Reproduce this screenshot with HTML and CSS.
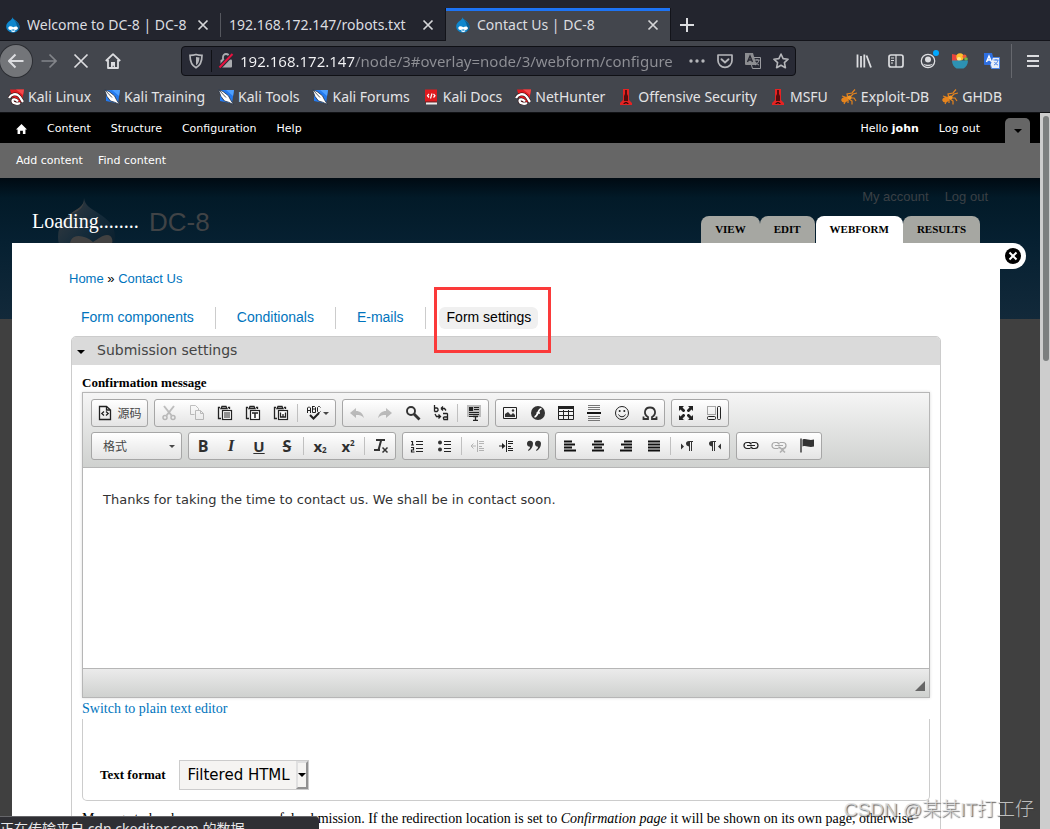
FILE: index.html
```html
<!DOCTYPE html>
<html lang="en">
<head>
<meta charset="utf-8">
<title>Contact Us | DC-8</title>
<link rel="stylesheet" href="styles.css">
</head>
<body>
<svg class="sprite" aria-hidden="true">
  <symbol id="drop" viewBox="1 0 14 16"><path fill="#0f86cc" d="M7.500 0.300C8 3 14.500 4.500 14.500 9.800C14.500 13.500 11 15.700 8 15.700S1.200 13.500 1.200 9.500C1.200 4.500 7 4 7.500.3Z"/><path fill="#0b5e94" d="M9 3c2 1.500 5.500 3 5.500 6.800 0 2-.8 3.500-2.500 4.400C12.500 10 12 6 9 3Z"/><path fill="#fff" d="M8.200 10.300C6.500 8.800 3.500 8.800 3.300 11c0 2.200 2.600 2.500 4.900 1.200 1.500 1.200 4.700.8 4.700-1 0-2.200-2.900-2-4.700-.9ZM6 14c1.300 1.200 3.300 1.200 4.500 0l-.6-.7c-1 .6-2.200.6-3.400 0Z"/></symbol>
  <symbol id="x" viewBox="0 0 16 16"><path d="M3.500 3.500l9 9M12.500 3.500l-9 9" stroke="currentColor" stroke-width="1.700" fill="none"/></symbol>
  <symbol id="stop" viewBox="0 0 16 16"><path d="M1.500 1.500l13 13M14.500 1.500l-13 13" stroke="currentColor" stroke-width="1.700" fill="none"/></symbol>
  <symbol id="plus" viewBox="0 0 16 16"><path d="M8 1v14M1 8h14" stroke="currentColor" stroke-width="2" fill="none"/></symbol>
  <symbol id="back" viewBox="0 0 16 16"><path d="M15.500 8H1M7.500 1.500L1 8l6.500 6.500" stroke="currentColor" stroke-width="2" fill="none"/></symbol>
  <symbol id="forward" viewBox="0 0 16 16"><path d="M.5 8H15M8.500 1.500L15 8l-6.500 6.500" stroke="currentColor" stroke-width="1.700" fill="none"/></symbol>
  <symbol id="home" viewBox="0 0 16 16"><path d="M.8 8L8 1.200 15.200 8M3 7v8h10V7" stroke="currentColor" stroke-width="1.800" stroke-linejoin="round" fill="none"/><path fill="currentColor" d="M6 9h4v6H8.700v-2.200h-1V15H6z"/></symbol>
  <symbol id="shield" viewBox="0 0 16 16"><path d="M8 1.500c2 .6 4 .8 6 .8C14 8 12.500 12.500 8 14.800 3.500 12.500 2 8 2 2.300c2 0 4-.2 6-.8Z" stroke="currentColor" stroke-width="1.700" fill="none"/><path fill="currentColor" d="M8 4v8.300C10.300 10.800 11.300 8 11.500 4.500 10 4.400 9 4.200 8 4Z"/></symbol>
  <symbol id="lock" viewBox="0 0 16 16"><path d="M5 7V4a3 3 0 016 0v3" stroke="#aaabaf" stroke-width="1.800" fill="none"/><rect x="2.500" y="6.500" width="11.500" height="8" rx="1" fill="#aaabaf"/><path d="M1.500 14.500L14.500 1" stroke="#292a34" stroke-width="4"/><path d="M1.500 14.500L14.500 1" stroke="#e7123f" stroke-width="2"/></symbol>
  <symbol id="dots" viewBox="0 0 16 16"><g fill="currentColor"><circle cx="2" cy="8" r="1.700"/><circle cx="8" cy="8" r="1.700"/><circle cx="14" cy="8" r="1.700"/></g></symbol>
  <symbol id="pocket" viewBox="0 0 16 16"><path d="M1 2h14v5.500a7 6.800 0 01-14 0Z" stroke="currentColor" stroke-width="1.700" stroke-linejoin="round" fill="none"/><path d="M4.500 6.200L8 9.500l3.500-3.300" stroke="currentColor" stroke-width="1.900" stroke-linecap="round" fill="none"/></symbol>
  <symbol id="translate" viewBox="0 0 16 16"><path fill="var(--a,#8c8d91)" d="M0 0h8l3.500 12H1a1 1 0 01-1-1Z"/><path d="M2.500 9L5 3l2.500 6M3.500 7h3" stroke="var(--b,#292a34)" stroke-width="1.400" fill="none"/><path fill="var(--d,none)" stroke="var(--c,#9b9ca1)" d="M9 4.500h6.500v11h-8L6.500 12"/><path d="M9.500 7h5M12 6v1.500M14 7c-.5 2.500-2 4-4 5M10.500 9c1 1.500 2 2.500 3.500 3" stroke="var(--c,#9b9ca1)" fill="none"/></symbol>
  <symbol id="star" viewBox="0 0 16 16"><path d="M8 1l2.100 4.600 5 .6-3.700 3.500 1 5L8 12.200l-4.400 2.500 1-5L.9 6.200l5-.6Z" stroke="currentColor" stroke-width="1.600" stroke-linejoin="round" fill="none"/></symbol>
  <symbol id="library" viewBox="0 0 16 16"><path d="M1.500 1.500v13M5 3v11.500M8.300 1.500v13M10.500 2.500l4.500 12" stroke="currentColor" stroke-width="1.800" fill="none"/></symbol>
  <symbol id="sidebar" viewBox="0 0 16 16"><rect x="1" y="2" width="14" height="12" rx="2" stroke="currentColor" stroke-width="1.700" fill="none"/><path d="M8 2v12M3 5h3M3 7.500h3M3 10h2" stroke="currentColor" stroke-width="1.200"/></symbol>
  <symbol id="account" viewBox="0 0 16 16"><circle cx="8" cy="8" r="6.700" stroke="currentColor" stroke-width="1.300" fill="none"/><circle cx="8" cy="6.500" r="3" fill="currentColor"/><path fill="currentColor" d="M3.200 10.800c3 1.400 6.500 1.400 9.600 0C11 14 5 14 3.200 10.800Z"/></symbol>
  <symbol id="bowl" viewBox="0 0 16 16"><path fill="#e8443c" d="M0 1l5 1 1 6H0Z"/><circle cx="8" cy="4" r="3.700" fill="#fdbf2d"/><circle cx="12.500" cy="3.500" r="2" fill="#ed5a3a"/><circle cx="14" cy="6" r="1.800" fill="#74b943"/><circle cx="7" cy="6" r="2" fill="#ffe58a"/><path fill="#2d91b2" d="M0 7.500h16c0 4-2 6.500-4.500 8h-7C2 14 0 11.500 0 7.500Z"/></symbol>
  <symbol id="menu" viewBox="0 0 16 16"><path d="M2 3h12M2 8h12M2 13h12" stroke="currentColor" stroke-width="2"/></symbol>
  <symbol id="kali" viewBox="0 0 16 16"><path fill="#e11d22" d="M2 0.500h14L14 13 6 14.500Z"/><path fill="#f4484b" d="M8 0.500h8L15 6Z"/><path d="M1 9C3 5 8 4 11 7c2 2 2.500 4 4 6M12 14C9 15.500 4.500 14.500 4.500 11.700c0-2.200 3.500-1.700 5.500.8" stroke="#2a0b0d" stroke-width="3.400" fill="none"/><path d="M1 9C3 5 8 4 11 7c2 2 2.500 4 4 6M12 14C9 15.500 4.500 14.500 4.500 11.700c0-2.200 3.500-1.700 5.500.8" stroke="#fff" stroke-width="2.300" fill="none"/></symbol>
  <symbol id="blade" viewBox="0 0 16 16"><path fill="#237af0" d="M2 1h14l-2 13.500L2 12Z"/><path fill="#4ea0ff" d="M8 1h8l-1 6Z"/><path fill="#fff" stroke="#26303f" stroke-width=".8" d="M.3.500L5 2.500l5.500 4.300 2 4 3 4.700-5-2.300-4-1.200L3 7.500Z"/><path stroke="#26303f" stroke-width=".8" fill="none" d="M1 1l7 7.500"/></symbol>
  <symbol id="docs" viewBox="0 0 16 16"><path fill="#e01a1f" d="M2 0.500h12v12H2Z"/><path fill="#9c1013" d="M2 12.500h12v1H2Z"/><path fill="#eee" d="M3 13.500h11v2H3Z"/><path d="M6 5L4.500 6.700 6 8.500M10.500 5L12 6.700l-1.500 1.800M9 4.500L7.500 9.500" stroke="#fff" stroke-width="1.200" fill="none"/></symbol>
  <symbol id="tower" viewBox="0 0 16 16"><path fill="#e62222" d="M5 0h6v11l3 3v2H2v-2l3-3Z"/><path fill="#570c0c" d="M7 1h2v4l1 2v5H6V7l1-2Z"/><path fill="#3a0909" d="M5 15l2-2h2l2 2H9l-1-1-1 1Z"/></symbol>
  <symbol id="bug" viewBox="0 0 16 16"><g stroke="#e6841d" stroke-width="1.200" fill="none"><path d="M7 9L6 5l5-1 3-3.500M9 8l3-3 4-1M9 9l4 0 2 3M8 10l3 2 0 3.500M5 11l-2 4M4 8L1 7M7 11l0 3"/></g><ellipse cx="4" cy="10.500" rx="3.800" ry="2.700" fill="#e6841d" transform="rotate(-20 4 10.500)"/><circle cx="8.500" cy="8.500" r="2" fill="#f0982a"/></symbol>
  <symbol id="adminhome" viewBox="0 0 12 12"><path fill="#fff" d="M6 0.500L12 6.500H10.300V11.500H7.500V8H4.500v3.500H1.700v-5H0Z"/></symbol>

  <symbol id="source" viewBox="0 0 16 16"><path d="M2.500 1.500h7L13.500 5v9.500h-11Z" stroke="#222" stroke-width="1.300" fill="none"/><path d="M9.500 1.500V5H13M7 6.500L4.800 8.500 7 10.500M9 6.500l2.200 2L9 10.500" stroke="#222" stroke-width="1.300" fill="none"/></symbol>
  <symbol id="cut" viewBox="0 0 16 16"><g stroke="#555" fill="none"><path stroke-width="2" d="M3 1l7.500 9.500M13 1L5.500 10.500"/><circle cx="4" cy="12.500" r="2" stroke-width="1.500"/><circle cx="12" cy="12.500" r="2" stroke-width="1.500"/></g></symbol>
  <symbol id="copy" viewBox="0 0 16 16"><path d="M5.500 9.500h-4v-9h5l3 3v2M6.500 5.500h5l3 3v6h-8ZM11.500 5.500v3h3" stroke="#555" fill="none"/></symbol>
  <symbol id="clip" viewBox="0 0 16 16"><path d="M3 2.500H1.500v11H4M11 2.500h1.500V4M4 3.500l1-2h4l1 2Z" stroke="#222" stroke-width="1.300" fill="none"/><rect x="5.500" y="5.500" width="9" height="9" stroke="#222" stroke-width="1.200" fill="#fff"/></symbol>
  <symbol id="paste" viewBox="0 0 16 16"><use href="#clip"/><path d="M7 8h6M7 10h6M7 12h6" stroke="#222"/></symbol>
  <symbol id="pastetext" viewBox="0 0 16 16"><use href="#clip"/><path d="M7 8h6M10 8v5" stroke="#222" stroke-width="1.500"/></symbol>
  <symbol id="pasteword" viewBox="0 0 16 16"><use href="#clip"/><path d="M7.500 7.500v4.500h2.500v-3 3h2.500V7.500" stroke="#222" stroke-width="1.300" fill="none"/></symbol>
  <symbol id="spell" viewBox="0 0 16 16"><path d="M1.500 8V3l1-1h1l1 1v5M1.500 5.500h3M6.500 1.500V7.500M6 1.500h2.500l1 1v1.500h-3M9.500 4v3.500H6.500M14.500 2.500l-1-1h-1l-1 1v4l1 1h1l1-1" stroke="#222" fill="none"/><path d="M4 10l3.500 3.500L13 8" stroke="#222" stroke-width="2" fill="none"/></symbol>
  <symbol id="undo" viewBox="0 0 16 16"><path fill="#555" d="M1 8l6-5v3c4 0 7 2.500 8 7-2-2.500-4.500-3-8-3v3Z"/></symbol>
  <symbol id="redo" viewBox="0 0 16 16"><path fill="#555" d="M15 8L9 3v3c-4 0-7 2.500-8 7 2-2.500 4.500-3 8-3v3Z"/></symbol>
  <symbol id="find" viewBox="0 0 16 16"><circle cx="6" cy="6" r="4" stroke="#333" stroke-width="1.900" fill="none"/><path d="M9 9l5.500 5.500" stroke="#333" stroke-width="2.800"/></symbol>
  <symbol id="replace" viewBox="0 0 16 16"><path d="M1.500 0v6.500M1.500 3h2.500l1 1v1.500l-1 1H1.500M10 8.500h4l.5.500v5.500H11l-.5-1v-1l1-.5h3M8 3.500h3.500l1.500 2M8 3.500l2-2M8 3.500l2 2M2 9l1.500 2.500h4M5.500 9.500l2 2-2 2" stroke="#222" stroke-width="1.300" fill="none"/></symbol>
  <symbol id="selectall" viewBox="0 0 16 16"><rect x="1" y="0" width="14" height="12" fill="#bbb"/><path fill="#222" d="M3 2h4v4H3z"/><path d="M8 2.500h5M8 4.500h5M3 7.500h10M3 9.500h10M3 11.500h4" stroke="#222"/><path d="M7 11.500h5M7 15.500h5M9.500 11.500v4" stroke="#222" stroke-width="1.300"/></symbol>
  <symbol id="image" viewBox="0 0 16 16"><path d="M1.500 2.500h13v11h-13Z" stroke="#222" fill="none"/><path fill="#333" d="M3 12V9l3-2 3 3 2-2 2 2v2Z"/><circle cx="11" cy="5.500" r="1.200" fill="#333"/></symbol>
  <symbol id="flash" viewBox="0 0 16 16"><circle cx="8" cy="8" r="7" fill="#333"/><path d="M11.500 3.500C7.500 4 8.500 11 4.500 12M6.500 8H10" stroke="#fff" stroke-width="1.700" fill="none"/></symbol>
  <symbol id="table" viewBox="0 0 16 16"><path d="M.5 2.500h15v12H.5ZM.5 6.500h15M.5 10.500h15M5.500 5v9.500M10.500 5v9.500" stroke="#222" fill="none"/><path fill="#222" d="M0 1h16v3H0z"/></symbol>
  <symbol id="hr" viewBox="0 0 16 16"><path d="M2 .5h12M2 2.500h12M2 4.500h12M2 11.500h12M2 13.500h12M2 15.500h12" stroke="#777"/><path d="M1 8h14" stroke="#111" stroke-width="2"/></symbol>
  <symbol id="smile" viewBox="0 0 16 16"><circle cx="8" cy="8" r="6.500" stroke="#222" fill="none"/><path d="M4.500 9.500c1.500 3 5.500 3 7 0" stroke="#222" fill="none"/><circle cx="5.700" cy="6" r="1" fill="#222"/><circle cx="10.300" cy="6" r="1" fill="#222"/></symbol>
  <symbol id="omega" viewBox="0 0 16 16"><path d="M1.500 11.500v2.500h4.500v-2C1 9 2.500 2.500 8 2.500S15 9 10 12v2h4.500v-2.500" stroke="#333" stroke-width="1.800" fill="none"/></symbol>
  <symbol id="maximize" viewBox="0 0 16 16"><path fill="#222" d="M1 1h5L4.500 2.500l3 3-2 2-3-3L1 6zM15 1v5l-1.500-1.500-3 3-2-2 3-3L10 1zM1 15v-5l1.500 1.500 3-3 2 2-3 3L6 15zM15 15h-5l1.500-1.500-3-3 2-2 3 3L15 10z"/><path d="M8 0v16M0 8h16" stroke="#f7f7f7" stroke-width="2"/></symbol>
  <symbol id="blocks" viewBox="0 0 16 16"><path d="M1.500 1.500h8v8h-8Z" stroke="#555" stroke-dasharray="1 1" fill="none"/><rect x="11.500" y="1.500" width="3" height="13" rx="1" stroke="#222" fill="none"/><rect x="1.500" y="11.500" width="8" height="3" rx="1" stroke="#222" fill="none"/></symbol>
  <symbol id="clear" viewBox="0 0 16 16"><path d="M3 2h9M8.200 2L5.500 12M1 12h6" stroke="#333" stroke-width="2" fill="none"/><path d="M9.500 9.500l5 5M14.500 9.500l-5 5" stroke="#333" stroke-width="1.500"/></symbol>
  <symbol id="ol" viewBox="0 0 16 16"><path d="M2 3.500h1.500V7M2 7h3M2 9.500h2.500V12H2.500v2h3M7 3.500h7M7 6.500h7M7 10.500h7M7 13.500h7" stroke="#222" stroke-width="1.200" fill="none"/></symbol>
  <symbol id="ul" viewBox="0 0 16 16"><circle cx="3" cy="4.500" r="2" fill="#333"/><circle cx="3" cy="11.500" r="2" fill="#333"/><path d="M7 3.500h7M7 6.500h7M7 10.500h7M7 13.500h7" stroke="#222" stroke-width="1.200"/></symbol>
  <symbol id="outdent" viewBox="0 0 16 16"><path d="M7.500 2v12M9 3.500h5M9 5.500h5M9 8.500h3M9 10.500h5M9 12.500h5M1 8h5M3.500 5.500L1 8l2.500 2.500" stroke="#444" fill="none"/></symbol>
  <symbol id="indent" viewBox="0 0 16 16"><path d="M8.500 2v12M10 3.500h5M10 5.500h5M10 8.500h3M10 10.500h5M10 12.500h5M1 8h5" stroke="#222" fill="none"/><path fill="#222" d="M4 5l3.500 3L4 11z"/></symbol>
  <symbol id="quote" viewBox="0 0 16 16"><path fill="#333" d="M1 6a3 3 0 016-.5C7 9 5 11.500 2.500 13L2 12c1.500-1 2-2 2-3.300A3 3 0 011 6ZM9 6a3 3 0 016-.5c0 3.500-2 6-4.500 7.500L10 12c1.500-1 2-2 2-3.300A3 3 0 019 6Z"/></symbol>
  <symbol id="left" viewBox="0 0 16 16"><path d="M2 3.500h8M2 6.500h11M2 9.500h8M2 12.500h12" stroke="#111" stroke-width="2"/></symbol>
  <symbol id="center" viewBox="0 0 16 16"><path d="M4 3.500h8M2 6.500h12M4 9.500h8M2 12.500h12" stroke="#111" stroke-width="2"/></symbol>
  <symbol id="right" viewBox="0 0 16 16"><path d="M6 3.500h8M3 6.500h11M6 9.500h8M2 12.500h12" stroke="#111" stroke-width="2"/></symbol>
  <symbol id="justify" viewBox="0 0 16 16"><path d="M2 3.500h12M2 6.500h12M2 9.500h12M2 12.500h12" stroke="#111" stroke-width="2"/></symbol>
  <symbol id="ltr" viewBox="0 0 16 16"><path fill="#333" d="M2 5.500L5 8.500 2 11.500zM14 3v1h-1v9h-1V4h-1v9h-1V8.500C6 8 6 3 10 3z"/></symbol>
  <symbol id="rtl" viewBox="0 0 16 16"><path fill="#333" d="M14 5.500L11 8.500l3 3zM9 3v1H8v9H7V4H6v9H5V8.500C1 8 1 3 5 3z"/></symbol>
  <symbol id="link" viewBox="0 0 16 16"><path d="M7.500 10.500H4a3 3 0 010-6h3.500M8.500 4.500H12a3 3 0 010 6H8.500M4 7.500h8" stroke="#222" stroke-width="1.200" fill="none"/><path d="M6.500 5.500h1.500v1M9.500 9.500H8v-1" stroke="#222" stroke-width="1.200" fill="none"/></symbol>
  <symbol id="unlink" viewBox="0 0 16 16"><use href="#link"/><path d="M9 9.500l5 5M14 9.500l-5 5" stroke="#444" stroke-width="1.700"/></symbol>
  <symbol id="flag" viewBox="0 0 16 16"><path d="M2 0.500v14" stroke="#222" stroke-width="1.300"/><path fill="#333" d="M3.500 1.500c4-1.500 6 1.500 11.500 0V8.500c-5.500 1.500-7.500-1.500-11.500 0Z"/></symbol>
</svg>

<header class="browser">
  <div class="tabstrip" role="tablist">
    <div class="tab" role="tab"><svg class="i16"><use href="#drop"/></svg><span class="tab-title">Welcome to DC-8 | DC-8</span><button class="plain" aria-label="Close tab"><svg class="i16"><use href="#x"/></svg></button></div>
    <div class="tab tab-split" role="tab"><span class="tab-title">192.168.172.147/robots.txt</span><button class="plain" aria-label="Close tab"><svg class="i16"><use href="#x"/></svg></button></div>
    <div class="tab tab-active" role="tab" aria-selected="true"><svg class="i16"><use href="#drop"/></svg><span class="tab-title">Contact Us | DC-8</span><button class="plain" aria-label="Close tab"><svg class="i16"><use href="#x"/></svg></button></div>
    <button class="plain new-tab" aria-label="New tab"><svg class="i16"><use href="#plus"/></svg></button>
  </div>
  <div class="navbar">
    <button class="plain back" aria-label="Back"><svg class="i16"><use href="#back"/></svg></button>
    <button class="plain dim" aria-label="Forward"><svg class="i16"><use href="#forward"/></svg></button>
    <button class="plain" aria-label="Stop"><svg class="i16"><use href="#stop"/></svg></button>
    <button class="plain" aria-label="Home"><svg class="i16"><use href="#home"/></svg></button>
    <div class="urlbar">
      <svg class="i16"><use href="#shield"/></svg><span class="url-rule"></span><svg class="i16"><use href="#lock"/></svg>
      <input class="url" type="text" aria-label="Address" value="192.168.172.147/node/3#overlay=node/3/webform/configure">
      <button class="plain" aria-label="Page actions"><svg class="i16"><use href="#dots"/></svg></button>
      <button class="plain" aria-label="Save to Pocket"><svg class="i16"><use href="#pocket"/></svg></button>
      <button class="plain" aria-label="Translate page"><svg class="i16"><use href="#translate"/></svg></button>
      <button class="plain" aria-label="Bookmark"><svg class="i16"><use href="#star"/></svg></button>
    </div>
    <div class="tools">
      <button class="plain" aria-label="Library"><svg class="i16"><use href="#library"/></svg></button>
      <button class="plain" aria-label="Sidebars"><svg class="i16"><use href="#sidebar"/></svg></button>
      <button class="plain account" aria-label="Account"><svg class="i16"><use href="#account"/></svg></button>
      <button class="plain" aria-label="Extension"><svg class="i16"><use href="#bowl"/></svg></button>
      <button class="plain gtranslate" aria-label="Translate"><svg class="i16"><use href="#translate"/></svg></button>
    </div>
    <button class="plain app-menu" aria-label="Menu"><svg class="i16"><use href="#menu"/></svg></button>
  </div>
  <nav class="bookmarks" aria-label="Bookmarks">
    <a href="#"><svg class="i16"><use href="#kali"/></svg>Kali Linux</a>
    <a href="#"><svg class="i16"><use href="#blade"/></svg>Kali Training</a>
    <a href="#"><svg class="i16"><use href="#blade"/></svg>Kali Tools</a>
    <a href="#"><svg class="i16"><use href="#blade"/></svg>Kali Forums</a>
    <a href="#"><svg class="i16"><use href="#docs"/></svg>Kali Docs</a>
    <a href="#"><svg class="i16"><use href="#kali"/></svg>NetHunter</a>
    <a href="#"><svg class="i16"><use href="#tower"/></svg>Offensive Security</a>
    <a href="#"><svg class="i16"><use href="#tower"/></svg>MSFU</a>
    <a href="#"><svg class="i16"><use href="#bug"/></svg>Exploit-DB</a>
    <a href="#"><svg class="i16"><use href="#bug"/></svg>GHDB</a>
  </nav>
</header>

<div class="viewport">
  <div class="site">
    <nav class="admin" aria-label="Administration">
      <a href="#" aria-label="Home" class="admin-home"><svg><use href="#adminhome"/></svg></a>
      <a href="#">Content</a><a href="#">Structure</a><a href="#">Configuration</a><a href="#">Help</a>
      <a href="#" class="hello">Hello <strong>john</strong></a><a href="#">Log out</a>
      <button class="drawer" aria-label="Toggle shortcuts"><span class="caret"></span></button>
    </nav>
    <nav class="shortcuts" aria-label="Shortcuts"><a href="#">Add content</a><a href="#">Find content</a></nav>

    <div class="stage">
      <div class="backdrop">
        <svg class="site-logo" viewBox="0 0 58 66"><defs><linearGradient id="lg" x1="0" y1="0" x2="1" y2="1"><stop offset="0" stop-color="#3a3d40"/><stop offset=".5" stop-color="#152b3a"/><stop offset="1" stop-color="#061a28"/></linearGradient></defs><path fill="url(#lg)" d="M26 0c1 8 7 10 14 15 9 6 17 12 17 24 0 16-13 27-28 27S0 54 0 39C0 25 10 17 18 12 23 9 26 6 26 0Z"/><path fill="#414141" d="M13 42c3-6 14-5 22 2 5-3 9-7 14-7 6 0 7 8 3 12-6 5-12 2-16-1-8 8-17 10-22 5-2-3-3-7-1-11ZM26 2c0 6-7 9-14 14 8-2 14-6 14-14Z"/></svg>
        <span class="site-name">DC-8</span>
        <span class="user-links"><a href="#">My account</a><a href="#">Log out</a></span>
      </div>
      <main class="overlay">
        <div class="overlay-head">
          <h1>Loading........</h1>
          <nav class="primary" aria-label="Primary tabs"><a href="#">VIEW</a><a href="#">EDIT</a><a href="#" class="on">WEBFORM</a><a href="#">RESULTS</a></nav>
        </div>
        <section class="panel">
          <button class="close" aria-label="Close overlay"><svg viewBox="0 0 16 16"><circle cx="8" cy="8" r="8" fill="#000"/><path d="M4.500 4.500l7 7M11.500 4.500l-7 7" stroke="#fff" stroke-width="2"/></svg></button>
          <div class="crumbs"><a href="#">Home</a> » <a href="#">Contact Us</a></div>
          <nav class="secondary" aria-label="Secondary tabs">
            <a href="#">Form components</a><a href="#">Conditionals</a><a href="#">E-mails</a>
            <span class="marked"><a href="#" class="on">Form settings</a></span>
          </nav>
          <form class="settings">
            <div class="legend"><span class="caret"></span>Submission settings</div>
            <div class="fields">
              <label class="field-label" for="message">Confirmation message</label>
              <div class="editor">
                <div class="bar">
                  <div class="row">
                    <div class="group"><button type="button" class="source"><svg class="i16"><use href="#source"/></svg>源码</button></div>
                    <div class="group">
                      <button type="button" class="off" aria-label="Cut"><svg class="i16"><use href="#cut"/></svg></button>
                      <button type="button" class="off" aria-label="Copy"><svg class="i16"><use href="#copy"/></svg></button>
                      <button type="button" aria-label="Paste"><svg class="i16"><use href="#paste"/></svg></button>
                      <button type="button" aria-label="Paste text"><svg class="i16"><use href="#pastetext"/></svg></button>
                      <button type="button" aria-label="Paste from Word"><svg class="i16"><use href="#pasteword"/></svg></button>
                      <i class="sep"></i>
                      <button type="button" class="spell" aria-label="Spell check"><svg class="i16"><use href="#spell"/></svg><span class="mini"></span></button>
                    </div>
                    <div class="group">
                      <button type="button" class="off" aria-label="Undo"><svg class="i16"><use href="#undo"/></svg></button>
                      <button type="button" class="off" aria-label="Redo"><svg class="i16"><use href="#redo"/></svg></button>
                      <button type="button" aria-label="Find"><svg class="i16"><use href="#find"/></svg></button>
                      <button type="button" aria-label="Replace"><svg class="i16"><use href="#replace"/></svg></button>
                      <i class="sep"></i>
                      <button type="button" aria-label="Select all"><svg class="i16"><use href="#selectall"/></svg></button>
                    </div>
                    <div class="group">
                      <button type="button" aria-label="Image"><svg class="i16"><use href="#image"/></svg></button>
                      <button type="button" aria-label="Flash"><svg class="i16"><use href="#flash"/></svg></button>
                      <button type="button" aria-label="Table"><svg class="i16"><use href="#table"/></svg></button>
                      <button type="button" aria-label="Horizontal line"><svg class="i16"><use href="#hr"/></svg></button>
                      <button type="button" aria-label="Smiley"><svg class="i16"><use href="#smile"/></svg></button>
                      <button type="button" aria-label="Special character"><svg class="i16"><use href="#omega"/></svg></button>
                    </div>
                    <div class="group">
                      <button type="button" aria-label="Maximize"><svg class="i16"><use href="#maximize"/></svg></button>
                      <button type="button" aria-label="Show blocks"><svg class="i16"><use href="#blocks"/></svg></button>
                    </div>
                  </div>
                  <div class="row">
                    <div class="group"><button type="button" class="format">格式<span class="mini"></span></button></div>
                    <div class="group">
                      <button type="button" class="letter bold">B</button>
                      <button type="button" class="letter italic">I</button>
                      <button type="button" class="letter under">U</button>
                      <button type="button" class="letter strike">S</button>
                      <i class="sep"></i>
                      <button type="button" class="letter" aria-label="Subscript">x<sub>2</sub></button>
                      <button type="button" class="letter" aria-label="Superscript">x<sup>2</sup></button>
                      <i class="sep"></i>
                      <button type="button" aria-label="Remove format"><svg class="i16"><use href="#clear"/></svg></button>
                    </div>
                    <div class="group">
                      <button type="button" aria-label="Numbered list"><svg class="i16"><use href="#ol"/></svg></button>
                      <button type="button" aria-label="Bulleted list"><svg class="i16"><use href="#ul"/></svg></button>
                      <i class="sep"></i>
                      <button type="button" class="off" aria-label="Outdent"><svg class="i16"><use href="#outdent"/></svg></button>
                      <button type="button" aria-label="Indent"><svg class="i16"><use href="#indent"/></svg></button>
                      <button type="button" aria-label="Quote"><svg class="i16"><use href="#quote"/></svg></button>
                    </div>
                    <div class="group">
                      <button type="button" aria-label="Left"><svg class="i16"><use href="#left"/></svg></button>
                      <button type="button" aria-label="Center"><svg class="i16"><use href="#center"/></svg></button>
                      <button type="button" aria-label="Right"><svg class="i16"><use href="#right"/></svg></button>
                      <button type="button" aria-label="Justify"><svg class="i16"><use href="#justify"/></svg></button>
                      <i class="sep"></i>
                      <button type="button" aria-label="Left to right"><svg class="i16"><use href="#ltr"/></svg></button>
                      <button type="button" aria-label="Right to left"><svg class="i16"><use href="#rtl"/></svg></button>
                    </div>
                    <div class="group">
                      <button type="button" aria-label="Link"><svg class="i16"><use href="#link"/></svg></button>
                      <button type="button" class="off" aria-label="Unlink"><svg class="i16"><use href="#unlink"/></svg></button>
                      <button type="button" aria-label="Anchor"><svg class="i16"><use href="#flag"/></svg></button>
                    </div>
                  </div>
                </div>
                <textarea id="message">Thanks for taking the time to contact us. We shall be in contact soon.</textarea>
                <div class="foot"><span class="grip"></span></div>
              </div>
              <a href="#" class="switch">Switch to plain text editor</a>
              <div class="filter">
                <label for="format">Text format</label>
                <span class="select"><select id="format"><option>Filtered HTML</option></select><span class="arrow"><span class="caret"></span></span></span>
              </div>
              <p class="help">Message to be shown upon successful submission. If the redirection location is set to <em>Confirmation page</em> it will be shown on its own page, otherwise</p>
            </div>
          </form>
        </section>
      </main>
    </div>
  </div>
  <div class="scrollbar"><div class="thumb"></div></div>
  <div class="status">正在传输来自 cdn.ckeditor.com 的数据...</div>
  <div class="watermark">CSDN @某某IT打工仔</div>
</div>
</body>
</html>
```
FILE: styles.css
```css
* { box-sizing: border-box; }
body { margin: 0; height: 100vh; display: flex; flex-direction: column; overflow: hidden; background: #404040; font-family: "Liberation Serif", serif; }
a { text-decoration: none; color: #0074bd; }
button { font: inherit; }
.sprite { position: absolute; width: 0; height: 0; }
.i16 { width: 16px; height: 16px; flex: none; display: block; }
.plain { border: 0; background: none; padding: 0; color: inherit; display: flex; }
.caret { border: 4px solid transparent; border-top-color: #000; border-bottom: 0; }

/* Browser chrome */
.browser { flex: none; background: #43464d; color: #dcdde0; font: 14px/20px "Noto Sans", "Noto Sans CJK SC", sans-serif; border-bottom: 1px solid #101114; }
.tabstrip { display: flex; height: 41px; padding-top: 8px; background: #23252e; box-shadow: inset 0 -1px #13141a; }
.tab { display: flex; align-items: center; gap: 6px; width: 220px; padding: 0 9px 0 5px; }
.tab .i16 { color: #d5d6d8; }
.tab-title { flex: 1; white-space: nowrap; overflow: hidden; }
.tab-split { width: 225px; padding-left: 9px; background: linear-gradient(#55575e, #55575e) 0 60% / 1px 24px no-repeat; }
.tab-active { width: 226px; padding-left: 9px; background: #43464d; border: solid #13141a; border-width: 0 1px; box-shadow: inset 0 3px #1d74f5; }
.new-tab { align-self: center; margin-left: 8px; }
.navbar { display: flex; align-items: center; height: 40px; gap: 16px; padding-right: 9px; }
.back { width: 32px; height: 32px; border-radius: 50%; background: #737579; align-items: center; justify-content: center; margin-right: -7px; box-shadow: 0 0 0 1px #2c2e33; }
.dim { color: #83858a; }
.urlbar { flex: 1; display: flex; align-items: center; gap: 12px; height: 30px; margin-left: 44px; padding: 0 6px; background: #282a35; border: 1px solid #0f1015; border-radius: 4px; color: #b5b6ba; }
.url-rule { width: 1px; height: 22px; margin: 0 -6px 0 -5px; background: #0f1015; }
.url { flex: 1; min-width: 0; margin-left: -6px; border: 0; padding: 0; outline: 0; font: inherit; font-size: 15px; color: transparent; background: linear-gradient(90deg, #f4f4f6 115px, #8f9096 115px); background-clip: text; -webkit-background-clip: text; }
.tools { display: flex; gap: 16px; margin-left: 44px; }
.account { position: relative; }
.account::after { content: ""; position: absolute; right: -3px; top: -3px; width: 6px; height: 6px; border-radius: 50%; background: #00a8ff; }
.gtranslate { --a: #2f6fe0; --b: #fff; --c: #4a84e8; --d: #e9eef7; }
.app-menu { height: 34px; align-items: center; padding-left: 13px; border-left: 1px solid #66686e; margin-left: -5px; }
.bookmarks { display: flex; align-items: center; height: 31px; padding: 0 8px; gap: 13px; }
.bookmarks a { display: flex; align-items: center; gap: 4px; color: #e3e4e6; white-space: nowrap; }

/* Page area */
.viewport { position: relative; flex: 1; min-height: 0; display: flex; overflow: hidden; }
.site { flex: 1; min-width: 0; }
.scrollbar { width: 10px; background: #cdcdcd; padding: 3px 1px 0 3px; }
.thumb { height: 245px; border-radius: 3px; background: #7c7f7f; }
.admin, .shortcuts { display: flex; align-items: center; font: 11px/16px "DejaVu Sans", sans-serif; padding-left: 16px; }
.admin { height: 30px; gap: 20px; background: #000; padding: 1px 10px 0 16px; }
.admin a, .shortcuts a { color: #fff; }
.admin-home svg { display: block; width: 11px; height: 12px; }
.hello { margin-left: auto; }
.drawer { align-self: flex-end; display: flex; align-items: center; justify-content: center; width: 25px; height: 25px; margin-left: 5px; padding: 0; border: 0; border-radius: 5px 5px 0 0; background: #666; }
.shortcuts { height: 35px; gap: 15px; background: #666; }
.stage { position: relative; }
.backdrop { position: absolute; inset: 0 0 auto 0; height: 141px; background: linear-gradient(#000a12, #021a28 20px, #062031 45%, #12293a); color: #3b4045; font-family: "Liberation Sans", sans-serif; display: flex; align-items: flex-start; padding: 0 52px 0 58px; }
.site-logo { width: 58px; height: 66px; margin-top: 20px; }
.site-name { font-size: 26px; line-height: 30px; margin: 29px 0 0 33px; color: #404346; }
.user-links { display: flex; gap: 16px; margin-left: auto; font-size: 13px; line-height: 16px; padding-top: 11px; }
.user-links a { color: inherit; }
.overlay { position: relative; margin: 0 40px 0 12px; }
.overlay-head { display: flex; align-items: flex-end; justify-content: space-between; height: 65px; padding: 0 20px; }
.overlay-head h1 { margin: 0 0 10px; font-size: 20px; line-height: 24px; font-weight: 400; color: #fff; }
.primary { display: flex; }
.primary a { height: 27px; padding: 0 14px; border-radius: 8px 8px 0 0; background: #a6a7a2; color: #000; font-size: 11px; line-height: 27px; font-weight: 700; }
.primary a.on { background: #fff; margin-left: 1px; }
.panel { position: relative; background: #fff; padding: 27px 59px 0; min-height: 700px; }
.close { position: absolute; left: 100%; top: 0; width: 26px; height: 26px; padding: 5px; border: 0; border-radius: 0 13px 13px 0; background: #fff; }
.close svg { display: block; width: 16px; height: 16px; }
.crumbs { font: 13px/18px "Liberation Sans", sans-serif; margin-left: -2px; }
.secondary { display: flex; align-items: center; height: 22px; margin: 19px 0 7px; font: 14px/22px "Liberation Sans", sans-serif; }
.secondary a { line-height: 20px; }
.secondary > a { padding: 0 21px 2px; border-right: 1px solid #ccc; }
.secondary > a:first-child { padding-left: 10px; }
.marked { position: relative; margin-left: 13px; }
.marked::after { content: ""; position: absolute; inset: -20px -13px -24px -5px; border: 3px solid #fb3a3a; }
.secondary .on { display: block; padding: 0 7px 2px 8px; border-radius: 6px; background: #f0f0f0; color: #000; }
.settings { border: 1px solid #ccc; border-radius: 5px 5px 0 0; }
.legend { display: flex; align-items: center; gap: 12px; height: 28px; padding: 0 5px 2px; background: #dadada; border-radius: 4px 4px 0 0; color: #444; font: 14px/20px "DejaVu Sans", sans-serif; }
.legend .caret { margin-top: 4px; }
.fields { padding: 9px 10px 0; font-size: 14px; line-height: 20px; }
.field-label { display: block; font-size: 13px; line-height: 18px; font-weight: 700; }
.editor { border: 1px solid #b6b6b6; box-shadow: 0 0 3px rgba(0, 0, 0, .15); }
.bar { height: 75px; padding: 6px 8px; border-bottom: 1px solid #b6b6b6; background: linear-gradient(#f5f5f5, #cfd1cf); display: flex; flex-direction: column; gap: 5px; }
.row { display: flex; gap: 6px; }
.group { display: flex; align-items: center; height: 28px; border: 1px solid #a6a6a6; border-radius: 3px; background: linear-gradient(#fff, #e4e4e4); }
.group button { display: flex; align-items: center; justify-content: center; width: 28px; height: 26px; padding: 0; border: 0; background: none; color: #474747; font: 12px/16px "Noto Sans CJK SC", sans-serif; }
.group .source { width: 55px; gap: 4px; }
.group .format { width: 89px; justify-content: space-between; padding: 0 6px 0 11px; }
.group .spell { width: 35px; gap: 1px; }
.group .off svg { opacity: .35; }
.mini { border: 3px solid transparent; border-top-color: #474747; border-bottom: 0; }
.sep { width: 1px; height: 18px; margin: 0 2px; background: #c0c0c0; }
.group .letter { font: 700 15px/20px "Open Sans", sans-serif; color: #2f2f2f; }
.group .bold { font-size: 16px; }
.letter sub, .letter sup { font-size: 8px; line-height: 8px; }
.letter sub { padding-top: 8px; }
.letter sup { padding-bottom: 6px; }
.group .italic { font: italic 700 17px/20px "Liberation Serif", serif; }
.group .under { text-decoration: underline; }
.group .strike { text-decoration: line-through; font-size: 16px; }
.editor textarea { display: block; width: 100%; height: 200px; padding: 21px 20px; border: 0; resize: none; outline: 0; color: #333; font: 13px/21px "DejaVu Sans", sans-serif; }
.foot { height: 29px; display: flex; justify-content: flex-end; align-items: flex-end; padding: 6px 4px; border-top: 1px solid #b6b6b6; background: linear-gradient(#ebebeb, #cfd1cf); }
.grip { border: 5px solid; border-color: transparent #666 #666 transparent; }
.switch { display: block; padding-top: 1px; }
.filter { display: flex; align-items: center; gap: 13px; height: 82px; padding: 30px 17px 0; border: 1px solid #ccc; border-top: 0; border-radius: 0 0 5px 5px; }
.filter label { font-size: 13px; font-weight: 700; }
.select { position: relative; display: flex; }
.select select { appearance: none; width: 130px; height: 30px; padding: 0 8px; border: 1px solid #ccc; border-radius: 0; background: #f5f4f2; color: #000; font: 15px/20px "DejaVu Sans", sans-serif; }
.arrow { position: absolute; inset: 1px 1px 1px auto; width: 12px; display: flex; align-items: center; justify-content: center; border: 2px solid; border-color: #e0e0e0 #919191 #919191 #e0e0e0; background: #f5f4f2; pointer-events: none; }
.help { margin: 8px 0 0; white-space: nowrap; }
.status { position: absolute; left: 0; bottom: 0; width: 319px; height: 13px; overflow: hidden; border-top: 1px solid #66666a; border-radius: 0 4px 0 0; background: #2f2f34; color: #e8e8ea; font: 14px/24px "Noto Sans", "Noto Sans CJK SC", sans-serif; }
.watermark { position: absolute; right: 16px; bottom: 5px; font: 300 19px/28px "Liberation Sans", "Noto Sans CJK SC", sans-serif; color: rgba(225, 225, 225, .8); text-shadow: 1px 1px 1px rgba(60, 60, 60, .8); }
```
